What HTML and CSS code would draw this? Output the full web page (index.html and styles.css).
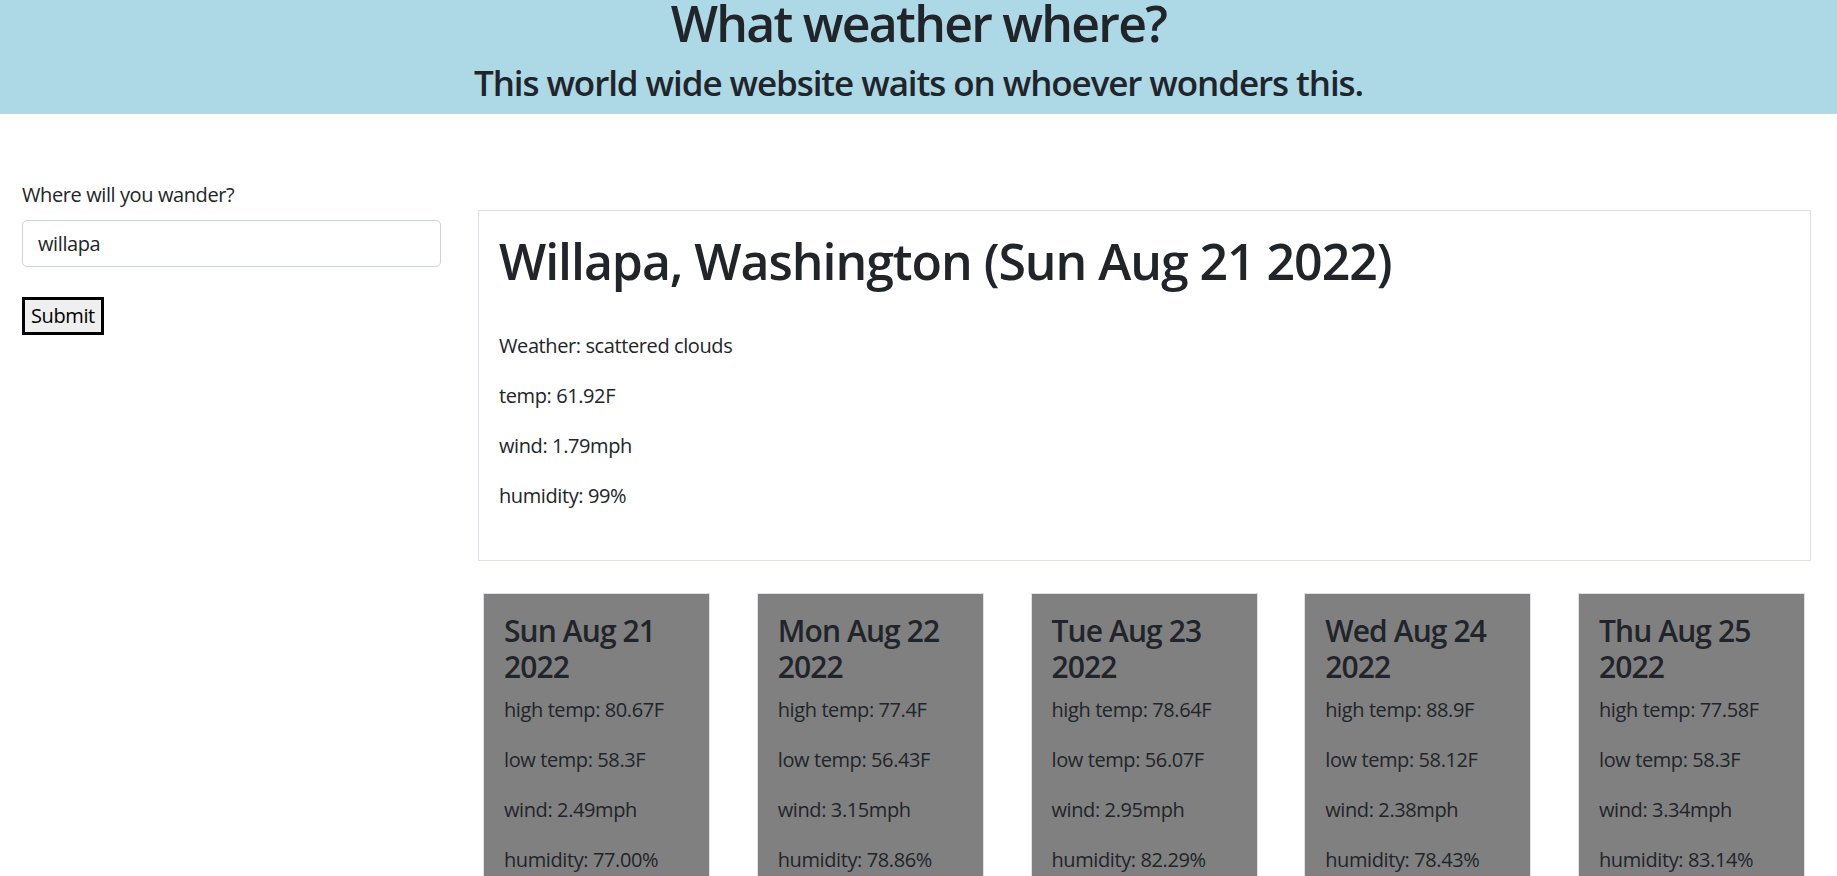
FILE: index.html
```html
<!DOCTYPE html>
<html lang="en">
<head>
  <meta charset="utf-8">
  <title>What weather where?</title>
  <link rel="stylesheet" href="styles.css">
</head>
<body>
  <header class="site-header">
    <h1 class="site-title">What weather where?</h1>
    <h3 class="site-tagline">This world wide website waits on whoever wonders this.</h3>
  </header>
  <div class="layout">
    <aside class="search">
      <form class="search-form">
        <label class="search-label" for="city">Where will you wander?</label>
        <input class="search-input" id="city" type="text" value="willapa">
        <button class="search-submit" type="button">Submit</button>
      </form>
    </aside>
    <main class="results">
      <section class="current">
        <h1 class="current-title">Willapa, Washington (Sun Aug 21 2022)</h1>
        <p class="stat">Weather: scattered clouds</p>
        <p class="stat">temp: 61.92F</p>
        <p class="stat">wind: 1.79mph</p>
        <p class="stat">humidity: 99%</p>
      </section>
      <section class="forecast">
        <article class="day-card">
          <h4 class="day-title">Sun Aug 21 2022</h4>
          <p class="stat">high temp: 80.67F</p>
          <p class="stat">low temp: 58.3F</p>
          <p class="stat">wind: 2.49mph</p>
          <p class="stat">humidity: 77.00%</p>
        </article>
        <article class="day-card">
          <h4 class="day-title">Mon Aug 22 2022</h4>
          <p class="stat">high temp: 77.4F</p>
          <p class="stat">low temp: 56.43F</p>
          <p class="stat">wind: 3.15mph</p>
          <p class="stat">humidity: 78.86%</p>
        </article>
        <article class="day-card">
          <h4 class="day-title">Tue Aug 23 2022</h4>
          <p class="stat">high temp: 78.64F</p>
          <p class="stat">low temp: 56.07F</p>
          <p class="stat">wind: 2.95mph</p>
          <p class="stat">humidity: 82.29%</p>
        </article>
        <article class="day-card">
          <h4 class="day-title">Wed Aug 24 2022</h4>
          <p class="stat">high temp: 88.9F</p>
          <p class="stat">low temp: 58.12F</p>
          <p class="stat">wind: 2.38mph</p>
          <p class="stat">humidity: 78.43%</p>
        </article>
        <article class="day-card">
          <h4 class="day-title">Thu Aug 25 2022</h4>
          <p class="stat">high temp: 77.58F</p>
          <p class="stat">low temp: 58.3F</p>
          <p class="stat">wind: 3.34mph</p>
          <p class="stat">humidity: 83.14%</p>
        </article>
      </section>
    </main>
  </div>
</body>
</html>
```

FILE: styles.css
```css
html {
  font-size: 20px;
  overflow: hidden;
}

body {
  margin: 0;
  font-family: "Open Sans", "Noto Sans", "Liberation Sans", sans-serif;
  font-size: 1rem;
  line-height: 1.5;
  letter-spacing: -0.02em;
  color: #212529;
  background: #fff;
}

.site-header {
  background: #add8e6;
  text-align: center;
  padding: 0 0 10px;
}

.site-title {
  margin: 0 0 16px;
  font-size: 50px;
  font-weight: 600;
  line-height: 46px;
  letter-spacing: -0.035em;
}

.site-tagline {
  margin: 0;
  font-size: 35px;
  font-weight: 600;
  line-height: 42px;
  letter-spacing: -0.031em;
}

.layout {
  display: flex;
  align-items: flex-start;
  padding: 0 26px 0 22px;
}

.search {
  flex: none;
  width: 419px;
  padding-top: 66px;
}

.search-label {
  display: block;
  margin-bottom: 10px;
  line-height: 30px;
}

.search-input {
  display: block;
  box-sizing: border-box;
  width: 100%;
  height: 47px;
  padding: 7px 15px;
  border: 1px solid #ced4da;
  border-radius: 5px;
  font: inherit;
  letter-spacing: inherit;
  line-height: 30px;
  color: #212529;
  background: #fff;
}

.search-submit {
  display: block;
  margin-top: 30px;
  padding: 2px 6px;
  border: 3px solid #000;
  border-radius: 0;
  background: #efefef;
  font: inherit;
  letter-spacing: inherit;
  line-height: 28px;
  color: #000;
}

.results {
  flex: 1;
  min-width: 0;
  margin-left: 37px;
  padding-top: 96px;
}

.current {
  border: 1px solid #dee2e6;
  padding: 20px 20px 29px;
}

.current-title {
  margin: 0 0 40px;
  font-size: 50px;
  font-weight: 600;
  line-height: 60px;
  letter-spacing: -0.021em;
}

.stat {
  margin: 0 0 20px;
  line-height: 30px;
}

.forecast {
  display: flex;
  justify-content: space-between;
  margin-top: 32px;
  padding: 0 6px 0 5px;
}

.day-card {
  box-sizing: border-box;
  width: 227px;
  background: #808080;
  border: 1px solid #dee2e6;
  padding: 19px 20px 20px;
}

.day-title {
  margin: 0 0 10px;
  font-size: 30px;
  font-weight: 600;
  line-height: 36px;
  letter-spacing: -0.03em;
}
```
